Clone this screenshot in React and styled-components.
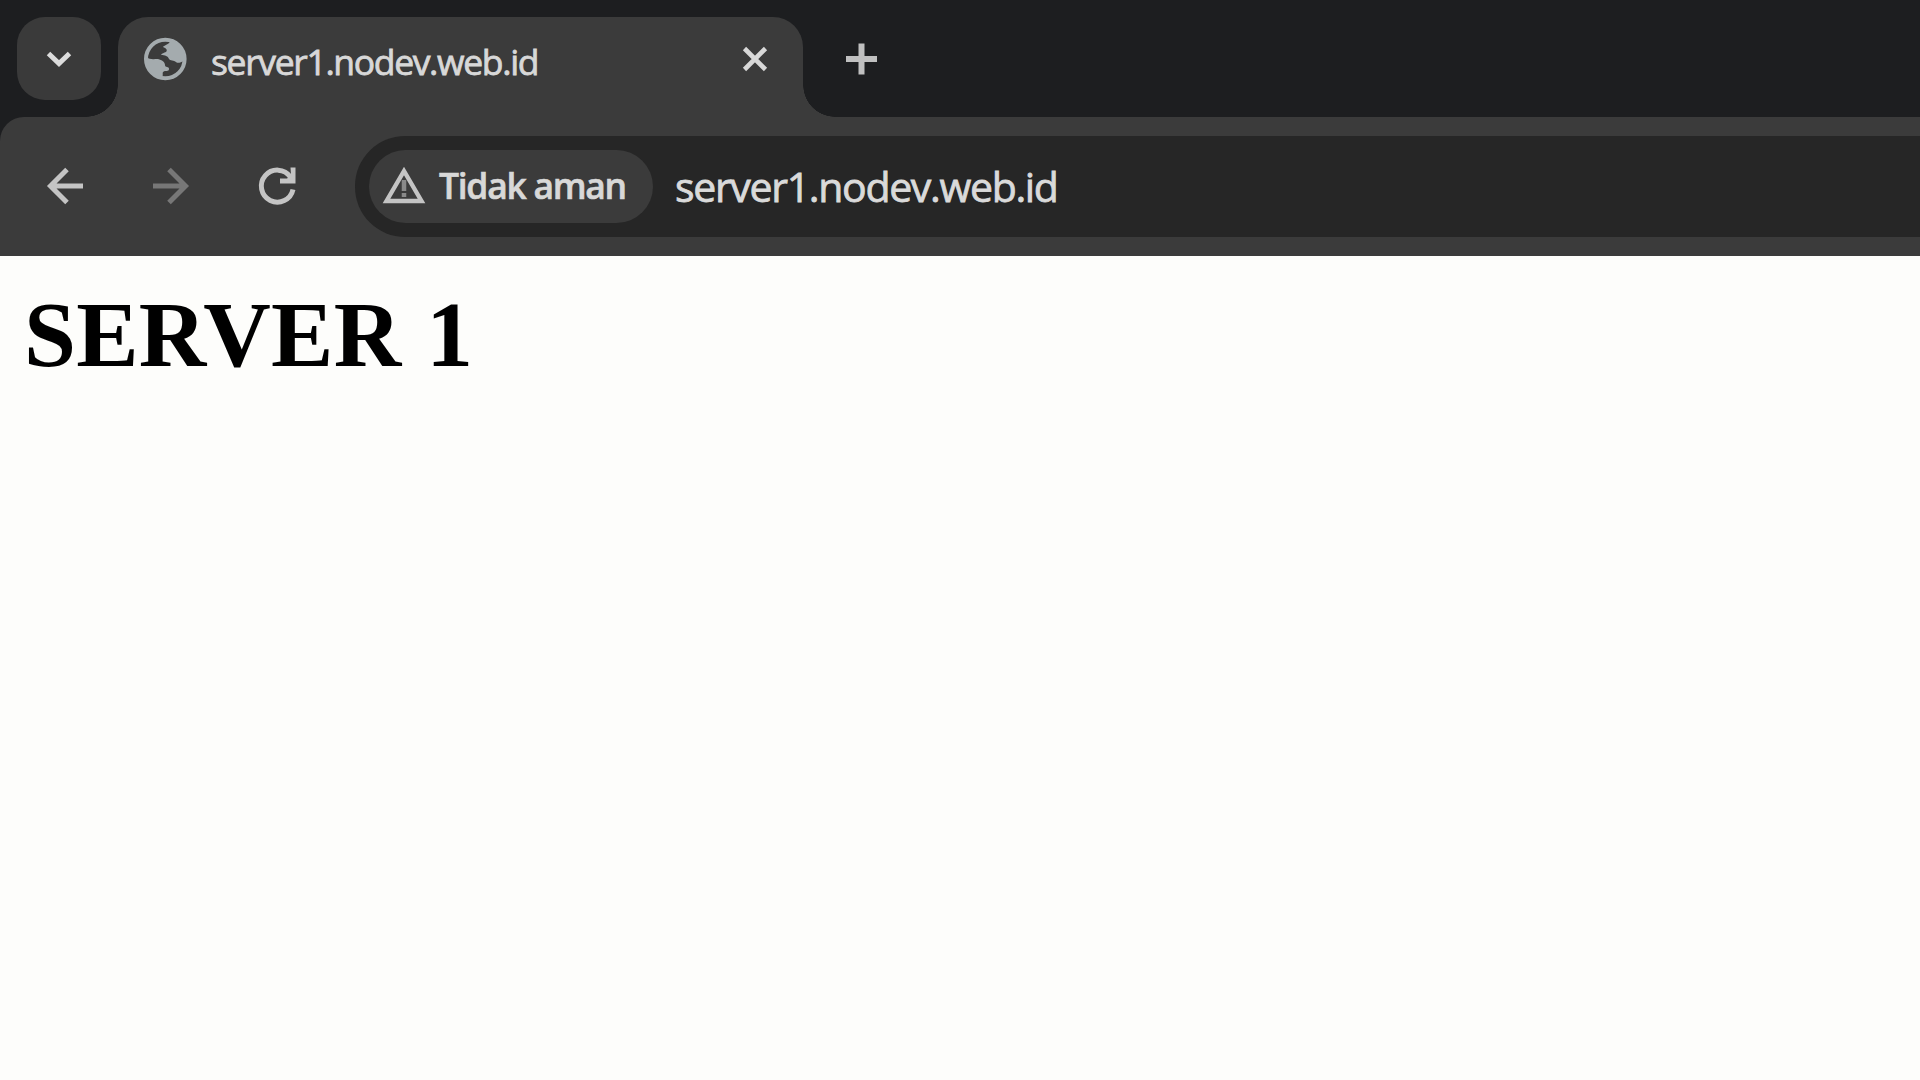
import React from "react"
import styled, { createGlobalStyle } from "styled-components"

const GlobalStyle = createGlobalStyle`
  * {
    box-sizing: border-box;
  }

  body {
    margin: 0;
    overflow: hidden;
    background: #fdfdfb;
  }
`

const Window = styled.div`
  display: flex;
  flex-direction: column;
  width: 100vw;
  height: 100vh;
  overflow: hidden;
  font-family: "Open Sans", "Noto Sans", sans-serif;
`

const TabStrip = styled.div`
  display: flex;
  align-items: flex-start;
  height: 117px;
  padding: 17px 0 0 17px;
  background: #1d1e20;
`

const TabSearch = styled.button`
  display: flex;
  align-items: center;
  justify-content: center;
  width: 84px;
  height: 83px;
  padding: 0;
  border: none;
  border-radius: 28px;
  background: #3a3a3a;
`

const Tab = styled.div`
  position: relative;
  display: flex;
  align-items: center;
  width: 685px;
  height: 100px;
  margin-left: 17px;
  padding: 0 34px 16px 25px;
  border-radius: 30px 30px 0 0;
  background: #3b3b3b;

  &::before,
  &::after {
    content: "";
    position: absolute;
    bottom: 0;
    width: 32px;
    height: 32px;
  }

  &::before {
    right: 100%;
    background: radial-gradient(circle at 0 0, transparent 31.5px, #3b3b3b 32px);
  }

  &::after {
    left: 100%;
    background: radial-gradient(circle at 100% 0, transparent 31.5px, #3b3b3b 32px);
  }
`

const TabTitle = styled.span`
  flex: 1;
  margin-left: 24px;
  padding-top: 3px;
  color: #d8d8d8;
  font-size: 35.5px;
  line-height: 48px;
  letter-spacing: -1.35px;
  white-space: nowrap;
  -webkit-text-stroke: 0.8px #d8d8d8;
`

const NewTab = styled.button`
  display: flex;
  margin: 26px 0 0 42px;
  padding: 0;
  border: none;
  background: none;
`

const ToolbarBack = styled.div`
  background: #1d1e20;
`

const Toolbar = styled.div`
  display: flex;
  align-items: center;
  height: 139px;
  padding: 0 0 1px 44px;
  border-radius: 24px 0 0 0;
  background: #3b3b3b;
`

const NavButton = styled.button`
  display: flex;
  width: 42px;
  margin-right: ${props => props.$gap}px;
  padding: 0;
  border: none;
  background: none;
  color: ${props => (props.disabled ? "#777777" : "#c4c4c4")};
`

const Omnibox = styled.div`
  display: flex;
  flex: 1;
  align-items: center;
  height: 101px;
  padding-left: 14px;
  border-radius: 50px 0 0 50px;
  background: #262626;
`

const SecurityChip = styled.div`
  display: flex;
  align-items: center;
  width: 284px;
  height: 73px;
  padding-left: 13px;
  border-radius: 37px;
  background: #3b3b3b;
`

const ChipLabel = styled.span`
  margin-left: 13px;
  padding-bottom: 2px;
  color: #d8d8d8;
  font-size: 35.5px;
  font-weight: 600;
  line-height: 48px;
  letter-spacing: -1.3px;
  white-space: nowrap;
  -webkit-text-stroke: 0.6px #d8d8d8;
`

const Url = styled.span`
  margin-left: 22px;
  color: #dadada;
  font-size: 41px;
  line-height: 56px;
  letter-spacing: -1.32px;
  white-space: nowrap;
  -webkit-text-stroke: 0.8px #dadada;
`

const Page = styled.main`
  flex: 1;
  padding: 25px 24px;
  background: #fdfdfb;
`

const Heading = styled.h1`
  margin: 0;
  color: #000;
  font-family: "Liberation Serif", "Times New Roman", serif;
  font-size: 93.5px;
  font-weight: 700;
  line-height: 108px;
  letter-spacing: 0.25px;
  word-spacing: 1px;
`

const ChevronIcon = () => (
  <svg width="30" height="30" viewBox="0 0 30 30" fill="none" stroke="#dcdcdc" strokeWidth="5">
    <path d="M4.5 9.5 15 19.5 25.5 9.5" />
  </svg>
)

const GlobeIcon = () => (
  <svg width="44" height="44" viewBox="0 0 44 44">
    <circle cx="22.3" cy="22" r="19.3" fill="none" stroke="#a4abae" strokeWidth="4" />
    <path
      fill="#a4abae"
      d="M27 3c1 4-6 5-7 7 3 1 5 3 3 5-2 1-4 1-5 3 4 0 7 1 8 4 1 2 5 1 7 3s5 0 8-1C43 13 36 5 27 3zM3 20c4 3 8 2 12 2 4 1 7 3 7 6s4 1 4 4-4 1-6 3c-1 2 1 4-2 6C8 39 2 31 3 20z"
    />
  </svg>
)

const CloseIcon = () => (
  <svg width="28" height="28" viewBox="0 0 28 28" fill="none" stroke="#d8d8d8" strokeWidth="4.6">
    <path d="M3.5 3.5 24.5 24.5M24.5 3.5 3.5 24.5" />
  </svg>
)

const PlusIcon = () => (
  <svg width="32" height="32" viewBox="0 0 32 32" fill="none" stroke="#c0c0c0" strokeWidth="6">
    <path d="M16.5 .5v31M1 16h31" />
  </svg>
)

const ArrowIcon = ({ flip }) => (
  <svg width="42" height="42" viewBox="0 0 42 42" fill="none" stroke="currentColor" strokeWidth="5">
    <path
      d="M39 21H7M23 4.5 6.5 21 23 37.5"
      transform={flip ? "translate(42 0) scale(-1 1)" : undefined}
    />
  </svg>
)

const ReloadIcon = () => (
  <svg width="42" height="42" viewBox="0 0 42 42" fill="none">
    <path d="M37 24.5A16 16 0 1 1 34.5 12" stroke="currentColor" strokeWidth="5" />
    <path d="M34.500 2.500h5v16H24v-5h7l4-3z" fill="currentColor" />
  </svg>
)

const WarningIcon = () => (
  <svg width="44" height="40" viewBox="0 0 44 40" fill="none">
    <path d="M22 5 39.5 35H4.5z" stroke="#c4c4c4" strokeWidth="4.4" />
    <path d="M22 14v11M22 27v4" stroke="#8a8a8a" strokeWidth="4.5" />
  </svg>
)

const App = () => {
  return (
    <Window>
      <GlobalStyle />
      <TabStrip>
        <TabSearch>
          <ChevronIcon />
        </TabSearch>
        <Tab>
          <GlobeIcon />
          <TabTitle>server1.nodev.web.id</TabTitle>
          <CloseIcon />
        </Tab>
        <NewTab>
          <PlusIcon />
        </NewTab>
      </TabStrip>
      <ToolbarBack>
        <Toolbar>
          <NavButton $gap={64}>
            <ArrowIcon />
          </NavButton>
          <NavButton $gap={64} disabled>
            <ArrowIcon flip />
          </NavButton>
          <NavButton $gap={57}>
            <ReloadIcon />
          </NavButton>
          <Omnibox>
            <SecurityChip>
              <WarningIcon />
              <ChipLabel>Tidak aman</ChipLabel>
            </SecurityChip>
            <Url>server1.nodev.web.id</Url>
          </Omnibox>
        </Toolbar>
      </ToolbarBack>
      <Page>
        <Heading>SERVER 1</Heading>
      </Page>
    </Window>
  )
}

export default App
